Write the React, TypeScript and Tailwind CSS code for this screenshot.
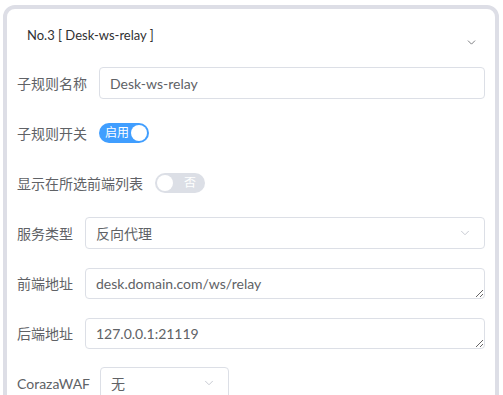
import { ChevronDown } from "lucide-react";

const font = { fontFamily: 'Lato, "Noto Sans CJK SC", sans-serif' };

function Row({
  label,
  children,
  mb = true,
  gap = "mr-3",
}: {
  label: string;
  children: React.ReactNode;
  mb?: boolean;
  gap?: string;
}) {
  return (
    <div className={`flex items-center h-8 ${mb ? "mb-[18px]" : ""}`}>
      <label className={`text-[14px] text-[#606266] whitespace-nowrap shrink-0 ${gap}`}>{label}</label>
      <div className="flex-1 flex items-center min-w-0">{children}</div>
    </div>
  );
}

function Switch({ on, text }: { on: boolean; text: string }) {
  return (
    <div
      className={`relative w-[50px] h-5 rounded-full flex items-center ${on ? "bg-[#409eff]" : "bg-[#dcdfe6]"}`}
    >
      <span
        className={`absolute top-0 h-5 leading-5 text-[12px] text-white ${on ? "left-[6px]" : "right-[9px]"}`}
      >
        {text}
      </span>
      <span className={`absolute top-[2px] w-4 h-4 rounded-full bg-white ${on ? "right-[2px]" : "left-[2px]"}`} />
    </div>
  );
}

function Select({ value, w }: { value: string; w?: string }) {
  return (
    <div
      className={`h-8 border border-[#dcdfe6] rounded-[4px] flex items-center justify-between pl-[10px] pr-[12px] ${w ?? "flex-1"}`}
    >
      <span className="text-[14px] text-[#606266]">{value}</span>
      <ChevronDown className="w-[14px] h-[14px] text-[#c0c4cc]" strokeWidth={1.5} />
    </div>
  );
}

export default function App() {
  return (
    <div className="w-[503px] h-[395px] bg-white overflow-hidden pt-[5px] pl-[3px] pr-[4px]" style={font}>
      <div className="border-4 border-[#dddee6] rounded-[12px] h-[420px] px-[10px]">
        <div className="flex items-start justify-between h-[58px]">
          <div className="pl-[10px] pt-[17px] text-[13px] text-[#303133] leading-[18px]">No.3 [ Desk-ws-relay ]</div>
          <ChevronDown className="mt-[27px] mr-[7px] w-[13px] h-[13px] text-[#606266]" strokeWidth={1.5} />
        </div>

        <Row label="子规则名称">
          <input
            readOnly
            value="Desk-ws-relay"
            className="flex-1 h-8 border border-[#dcdfe6] rounded-[4px] px-[10px] text-[14px] text-[#606266] outline-none"
            style={font}
          />
        </Row>
        <Row label="子规则开关">
          <Switch on text="启用" />
        </Row>
        <Row label="显示在所选前端列表">
          <Switch on={false} text="否" />
        </Row>
        <Row label="服务类型">
          <Select value="反向代理" />
        </Row>
        <Row label="前端地址">
          <textarea
            readOnly
            rows={1}
            value="desk.domain.com/ws/relay"
            className="flex-1 h-[31px] border border-[#dcdfe6] rounded-[4px] px-[10px] py-[4px] text-[14px] leading-[21px] text-[#606266] outline-none"
            style={font}
          />
        </Row>
        <Row label="后端地址">
          <textarea
            readOnly
            rows={1}
            value="127.0.0.1:21119"
            className="flex-1 h-[31px] border border-[#dcdfe6] rounded-[4px] px-[10px] py-[4px] text-[14px] leading-[21px] text-[#606266] outline-none"
            style={font}
          />
        </Row>
        <Row label="CorazaWAF" mb={false} gap="mr-[10px]">
          <Select value="无" w="w-[129px]" />
        </Row>
      </div>
    </div>
  );
}
